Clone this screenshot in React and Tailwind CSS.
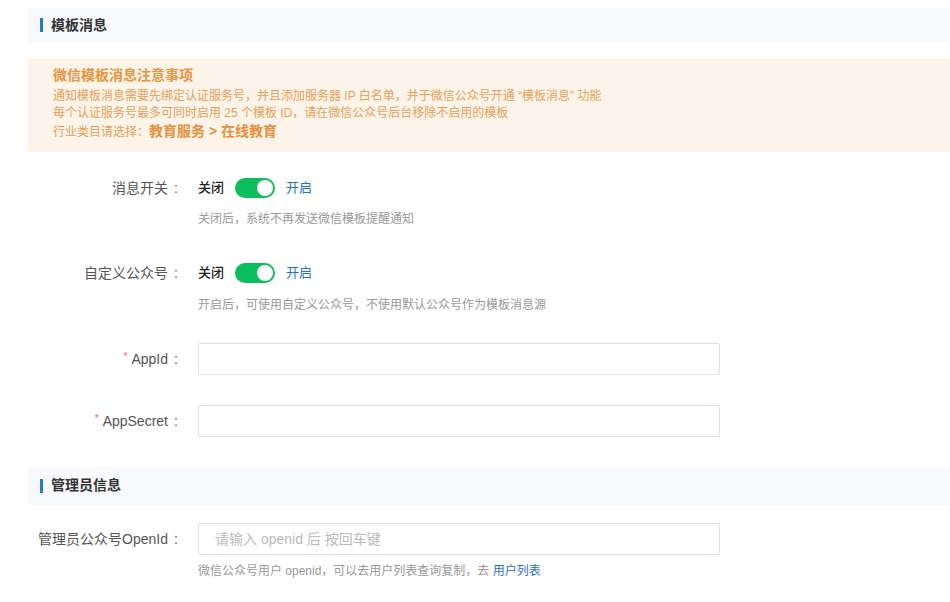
import React from 'react';

const font = { fontFamily: '"Liberation Sans", "Noto Sans CJK SC", sans-serif' };

const SectionHeader = ({ title, className }) => (
  <div className={`flex items-center bg-[#f7f9fc] pl-3 ${className}`}>
    <span className="w-[3px] h-[14px] bg-[#1f7ae0] mr-2" />
    <span className="text-[14px] font-semibold text-[#333]">{title}</span>
  </div>
);

const Label = ({ children, required }) => (
  <div className="w-[170px] shrink-0 pr-[14px] flex items-center justify-end text-[14px] text-[#555]">
    {required && <span className="text-[#f56c6c] text-[10px] mr-1 self-start">*</span>}
    <span>{children}</span>
    <span className="inline-block w-[16px] text-center">:</span>
  </div>
);

const Toggle = () => (
  <div className="flex items-center gap-[11px]">
    <span className="text-[13px] font-medium text-[#222]">关闭</span>
    <div className="relative w-[40px] h-[20px] rounded-full bg-[#0bbf5d]">
      <span className="absolute right-[2px] top-[2px] w-[16px] h-[16px] rounded-full bg-white" />
    </div>
    <span className="text-[13px] text-[#1f6fdd]">开启</span>
  </div>
);

const Hint = ({ children, className }) => (
  <div className={`pl-[170px] text-[12px] leading-[18px] text-[#999] ${className}`}>{children}</div>
);

const Input = ({ placeholder }) => (
  <input
    className="w-[522px] h-[32px] border border-[#dcdfe6] rounded-[2px] px-4 text-[14px] outline-none placeholder:text-[#bbb]"
    placeholder={placeholder}
  />
);

export default function App() {
  return (
    <div className="bg-white min-h-[602px] pl-[28px] pt-2" style={font}>
      <SectionHeader title="模板消息" className="h-[34px]" />

      <div className="mt-4 bg-[#fdf4e9] rounded-l-[4px] pl-[25px] pt-[8px] pb-[10px] text-[#eba058]">
        <div className="text-[14px] leading-[19px] font-semibold text-[#e9953f]">微信模板消息注意事项</div>
        <div className="mt-[3px] text-[12px] leading-[17px]">通知模板消息需要先绑定认证服务号，并且添加服务器 IP 白名单，并于微信公众号开通 “模板消息” 功能</div>
        <div className="text-[12px] leading-[17px]">每个认证服务号最多可同时启用 25 个模板 ID，请在微信公众号后台移除不启用的模板</div>
        <div className="text-[12px] leading-[19px]">
          行业类目请选择：<span className="text-[14px] font-semibold text-[#e8903a]">教育服务 &gt; 在线教育</span>
        </div>
      </div>

      <div className="mt-5 flex items-center h-8">
        <Label>消息开关</Label>
        <Toggle />
      </div>
      <Hint className="mt-[6px]">关闭后，系统不再发送微信模板提醒通知</Hint>

      <div className="mt-[29px] flex items-center h-8">
        <Label>自定义公众号</Label>
        <Toggle />
      </div>
      <Hint className="mt-[7px]">开启后，可使用自定义公众号，不使用默认公众号作为模板消息源</Hint>

      <div className="mt-[29px] flex items-center">
        <Label required>AppId</Label>
        <Input />
      </div>

      <div className="mt-[30px] flex items-center">
        <Label required>AppSecret</Label>
        <Input />
      </div>

      <SectionHeader title="管理员信息" className="mt-[29px] h-[39px]" />

      <div className="mt-[18px] flex items-center">
        <Label>管理员公众号OpenId</Label>
        <Input placeholder="请输入 openid 后 按回车键" />
      </div>
      <Hint className="mt-[7px]">
        微信公众号用户 openid，可以去用户列表查询复制，去 <span className="text-[#1f6fdd]">用户列表</span>
      </Hint>
    </div>
  );
}
